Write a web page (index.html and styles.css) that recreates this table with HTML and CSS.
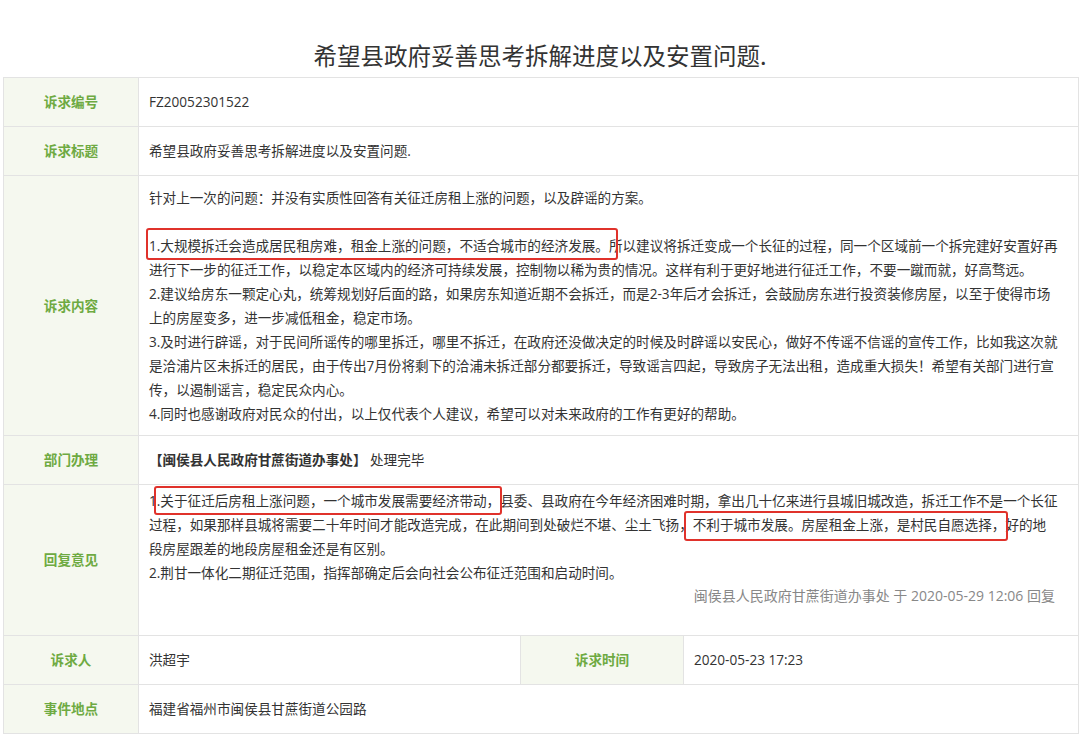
FILE: index.html
```html
<!DOCTYPE html>
<html lang="zh-CN">
<head>
<meta charset="utf-8">
<title>诉求详情</title>
<link rel="stylesheet" href="styles.css">
</head>
<body>
<h1 class="title">希望县政府妥善思考拆解进度以及安置问题.</h1>
<table class="detail">
  <colgroup>
    <col class="c-label">
    <col class="c-val">
    <col class="c-label2">
    <col class="c-val2">
  </colgroup>
  <tr class="row">
    <th class="label">诉求编号</th>
    <td class="value" colspan="3">FZ20052301522</td>
  </tr>
  <tr class="row">
    <th class="label">诉求标题</th>
    <td class="value" colspan="3">希望县政府妥善思考拆解进度以及安置问题.</td>
  </tr>
  <tr>
    <th class="label">诉求内容</th>
    <td class="value content" colspan="3">
      <p class="para first">针对上一次的问题：并没有实质性回答有关征迁房租上涨的问题，以及辟谣的方案。</p>
      <p class="para"><span class="mark m1">1.大规模拆迁会造成居民租房难，租金上涨的问题，不适合城市的经济发展。</span>所以建议将拆迁变成一个长征的过程，同一个区域前一个拆完建好安置好再<br>进行下一步的征迁工作，以稳定本区域内的经济可持续发展，控制物以稀为贵的情况。这样有利于更好地进行征迁工作，不要一蹴而就，好高骛远。</p>
      <p class="para">2.建议给房东一颗定心丸，统筹规划好后面的路，如果房东知道近期不会拆迁，而是2-3年后才会拆迁，会鼓励房东进行投资装修房屋，以至于使得市场<br>上的房屋变多，进一步减低租金，稳定市场。</p>
      <p class="para">3.及时进行辟谣，对于民间所谣传的哪里拆迁，哪里不拆迁，在政府还没做决定的时候及时辟谣以安民心，做好不传谣不信谣的宣传工作，比如我这次就<br>是洽浦片区未拆迁的居民，由于传出7月份将剩下的洽浦未拆迁部分都要拆迁，导致谣言四起，导致房子无法出租，造成重大损失！希望有关部门进行宣<br>传，以遏制谣言，稳定民众内心。</p>
      <p class="para">4.同时也感谢政府对民众的付出，以上仅代表个人建议，希望可以对未来政府的工作有更好的帮助。</p>
    </td>
  </tr>
  <tr class="row">
    <th class="label">部门办理</th>
    <td class="value" colspan="3"><strong class="dept">【闽侯县人民政府甘蔗街道办事处】</strong> 处理完毕</td>
  </tr>
  <tr>
    <th class="label">回复意见</th>
    <td class="value reply" colspan="3">
      <p class="para">1<span class="mark m2">.关于征迁后房租上涨问题，一个城市发展需要经济带动，</span>县委、县政府在今年经济困难时期，拿出几十亿来进行县城旧城改造，拆迁工作不是一个长征<br>过程，如果那样县城将需要二十年时间才能改造完成，在此期间到处破烂不堪、尘土飞扬，<span class="mark m3">不利于城市发展。房屋租金上涨，是村民自愿选择，</span>好的地<br>段房屋跟差的地段房屋租金还是有区别。</p>
      <p class="para">2.荆甘一体化二期征迁范围，指挥部确定后会向社会公布征迁范围和启动时间。</p>
      <p class="sign">闽侯县人民政府甘蔗街道办事处 于 2020-05-29 12:06 回复</p>
    </td>
  </tr>
  <tr class="row">
    <th class="label">诉求人</th>
    <td class="value">洪超宇</td>
    <th class="label">诉求时间</th>
    <td class="value">2020-05-23 17:23</td>
  </tr>
  <tr class="row">
    <th class="label">事件地点</th>
    <td class="value" colspan="3">福建省福州市闽侯县甘蔗街道公园路</td>
  </tr>
</table>
</body>
</html>
```

FILE: styles.css
```css
* {
  box-sizing: border-box;
}

body {
  margin: 0;
  background: #ffffff;
  font-family: "Open Sans", "Noto Sans CJK SC", sans-serif;
  color: #333333;
}

.title {
  margin: 39px 0 6px;
  font-family: "Noto Sans CJK SC", sans-serif;
  font-size: 23.5px;
  line-height: 32px;
  font-weight: 400;
  text-align: center;
  color: #333333;
}

.detail {
  margin-left: 3px;
  width: 1075px;
  border-collapse: collapse;
  table-layout: fixed;
  font-size: 13.6px;
  line-height: 24px;
}

.c-label { width: 135px; }
.c-val { width: 382px; }
.c-label2 { width: 163px; }
.c-val2 { width: 395px; }

.detail th,
.detail td {
  border: 1px solid #e3e3e3;
  vertical-align: middle;
}

.row th,
.row td {
  height: 49px;
}

.label {
  background: #f5f8ef;
  color: #6eaa42;
  font-weight: 700;
  text-align: center;
  padding: 0;
}

.value {
  padding: 0 6px 0 10px;
  text-align: left;
  color: #333333;
}

.dept {
  font-weight: 700;
}

.para {
  margin: 0;
}

.content {
  padding-top: 10px;
  padding-bottom: 9px;
}

.content .first {
  margin-bottom: 24px;
}

.reply {
  padding-top: 4px;
  padding-bottom: 28px;
}

.sign {
  margin: 0;
  padding-right: 17px;
  font-size: 14px;
  line-height: 22px;
  text-align: right;
  color: #888888;
}

.mark {
  position: relative;
}

.mark::after {
  content: "";
  position: absolute;
  top: -5px;
  bottom: -6px;
  left: -3px;
  right: -3px;
  border: 2px solid #e0322b;
  border-radius: 3px;
  pointer-events: none;
}

.m1::after {
  top: -8px;
  bottom: -5px;
  right: -9px;
}

.m2::after {
  top: -5px;
  bottom: -5px;
  left: -3px;
  right: -2px;
}

.m3::after {
  top: -4px;
  bottom: -7px;
  left: -9px;
  right: -3px;
}
```
